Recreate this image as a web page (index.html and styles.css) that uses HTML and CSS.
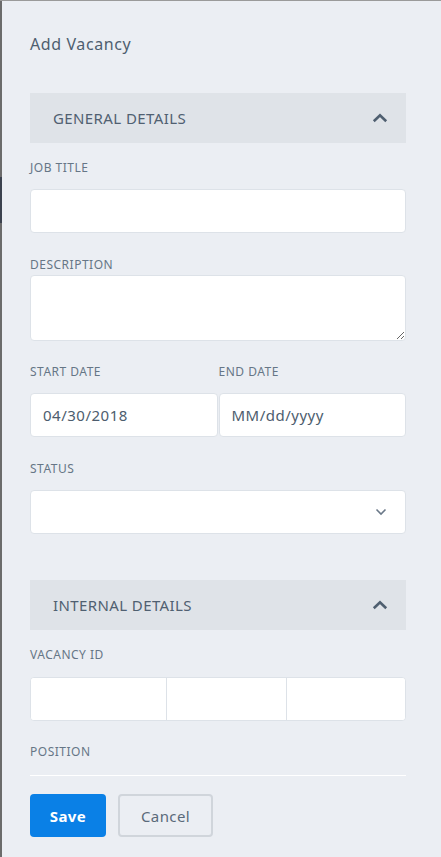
FILE: index.html
```html
<!DOCTYPE html>
<html lang="en">
<head>
    <meta charset="UTF-8">
    <meta name="viewport" content="width=device-width, initial-scale=1.0">
    <title>Add Vacancy</title>
    <link rel="stylesheet" href="styles.css">
</head>
<body>
    <div class="frame">
        <div class="edge"></div>

        <div class="panel">
            <h1 class="title">Add Vacancy</h1>

            <div class="section-head">
                <span>GENERAL DETAILS</span>
                <svg class="chevron" width="16" height="10" viewBox="0 0 16 10">
                    <path d="M1.8 8.2 L8 2.2 L14.2 8.2" fill="none" stroke="#4f5f70" stroke-width="2.6"/>
                </svg>
            </div>

            <div class="field first">
                <label class="label label-gap">JOB TITLE</label>
                <input class="input" type="text">
            </div>

            <div class="field">
                <label class="label tight">DESCRIPTION</label>
                <textarea class="input textarea"></textarea>
            </div>

            <div class="field row close">
                <div class="col">
                    <label class="label label-gap">START DATE</label>
                    <input class="input date" type="text" value="04/30/2018">
                </div>
                <div class="col">
                    <label class="label label-gap">END DATE</label>
                    <input class="input date" type="text" placeholder="MM/dd/yyyy">
                </div>
            </div>

            <div class="field">
                <label class="label label-gap">STATUS</label>
                <div class="input select">
                    <svg width="12" height="8" viewBox="0 0 12 8">
                        <path d="M1.5 1.5 L6 6 L10.5 1.5" fill="none" stroke="#6a7888" stroke-width="1.6"/>
                    </svg>
                </div>
            </div>

            <div class="section-head second">
                <span>INTERNAL DETAILS</span>
                <svg class="chevron" width="16" height="10" viewBox="0 0 16 10">
                    <path d="M1.8 8.2 L8 2.2 L14.2 8.2" fill="none" stroke="#4f5f70" stroke-width="2.6"/>
                </svg>
            </div>

            <div class="field first">
                <label class="label label-gap wide-gap">VACANCY ID</label>
                <div class="id-group">
                    <input class="id-part wide" type="text">
                    <input class="id-part" type="text">
                    <input class="id-part" type="text">
                </div>
            </div>

            <div class="field close">
                <label class="label">POSITION</label>
                <div class="position-line"></div>
            </div>

            <div class="actions">
                <button class="btn btn-save">Save</button>
                <button class="btn btn-cancel">Cancel</button>
            </div>
        </div>
    </div>
</body>
</html>
```

FILE: styles.css
```css
html, body {
    margin: 0;
    padding: 0;
    height: 100%;
}

body {
    font-family: "Noto Sans", "Open Sans", sans-serif;
    background: #ebeef3;
    color: #4d5d6e;
}

.frame {
    display: flex;
    min-height: 100%;
    border-top: 1px solid #9a9a9a;
    box-sizing: border-box;
}

.edge {
    width: 2px;
    flex-shrink: 0;
    background: linear-gradient(to bottom, #6b6b6b 0, #6b6b6b 176px, #3b424e 176px, #3b424e 222px, #6b6b6b 222px);
}

.panel {
    flex: 1;
    min-width: 0;
    padding: 32px 35px 0 28px;
}

.title {
    margin: 0;
    font-size: 16px;
    font-weight: 400;
    line-height: 22px;
    letter-spacing: 0.6px;
    color: #4e5e6f;
}

.section-head {
    display: flex;
    align-items: center;
    justify-content: space-between;
    height: 50px;
    margin-top: 38px;
    padding: 0 18px 0 23px;
    background: #dfe3e8;
    font-size: 15px;
    letter-spacing: 0.4px;
    color: #506071;
}

.section-head.second {
    margin-top: 46px;
}

.field {
    margin-top: 24px;
}

.field.first {
    margin-top: 17px;
}

.field.close {
    margin-top: 23px;
}

.label {
    display: block;
    font-size: 12px;
    line-height: 16px;
    letter-spacing: 0.5px;
    color: #667686;
    margin-bottom: 1px;
}

.label.tight {
    margin-bottom: 2px;
}

.label-gap {
    margin-bottom: 13px;
}

.wide-gap {
    margin-bottom: 14px;
}

.input {
    display: block;
    box-sizing: border-box;
    width: 100%;
    height: 44px;
    margin: 0;
    border: 1px solid #dde2e8;
    border-radius: 4px;
    background: #fff;
    font-family: inherit;
    font-size: 15px;
    letter-spacing: 0.5px;
    color: #4d5d6e;
    padding: 0 12px;
    outline: none;
}

.textarea {
    height: 66px;
    resize: vertical;
}

.row {
    display: flex;
    gap: 1px;
}

.col {
    flex: 1;
    min-width: 0;
}

.date::placeholder {
    color: #4d5d6e;
}

.select {
    display: flex;
    align-items: center;
    justify-content: flex-end;
    padding-right: 18px;
}

.id-group {
    display: flex;
    height: 44px;
    border: 1px solid #dde2e8;
    border-radius: 4px;
    background: #fff;
    box-sizing: border-box;
    overflow: hidden;
}

.id-part {
    flex: 119;
    width: 0;
    min-width: 0;
    border: none;
    border-left: 1px solid #dde2e8;
    background: #fff;
    outline: none;
    padding: 0;
}

.id-part.wide {
    flex: 136;
    border-left: none;
}

.position-line {
    height: 1px;
    margin-top: 15px;
    background: #fff;
}

.actions {
    display: flex;
    gap: 12px;
    margin-top: 18px;
}

.btn {
    height: 43px;
    border-radius: 4px;
    font-family: inherit;
    font-size: 15px;
    letter-spacing: 0.4px;
    cursor: pointer;
}

.btn-save {
    width: 76px;
    border: none;
    background: #0a80e6;
    color: #fff;
    font-weight: 700;
}

.btn-cancel {
    width: 95px;
    border: 2px solid #d0d5db;
    background: transparent;
    color: #5a6a7a;
}
```
